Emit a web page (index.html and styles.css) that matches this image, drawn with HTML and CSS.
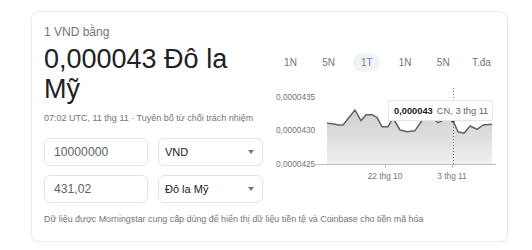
FILE: index.html
```html
<!DOCTYPE html>
<html lang="vi">
<head>
<meta charset="utf-8">
<link rel="stylesheet" href="styles.css">
</head>
<body>
<div class="card">
  <div class="main">
    <div class="left">
      <div class="label">1 VND bằng</div>
      <div class="value">0,000043 Đô la Mỹ</div>
      <div class="time">07:02 UTC, 11 thg 11 · Tuyên bố từ chối trách nhiệm</div>
      <div class="form">
        <div class="row">
          <div class="input">10000000</div>
          <div class="select"><span>VND</span><span class="caret"></span></div>
        </div>
        <div class="row">
          <div class="input">431,02</div>
          <div class="select"><span>Đô la Mỹ</span><span class="caret"></span></div>
        </div>
      </div>
    </div>
    <div class="right">
      <div class="tabs">
        <div class="tab">1N</div>
        <div class="tab">5N</div>
        <div class="tab active">1T</div>
        <div class="tab">1N</div>
        <div class="tab">5N</div>
        <div class="tab">T.đa</div>
      </div>
      <svg class="chart" width="226" height="100" viewBox="270 85 226 100">
        <defs>
          <linearGradient id="fill" x1="0" y1="0" x2="0" y2="1">
            <stop offset="0" stop-color="#cfcfcf"/>
            <stop offset="1" stop-color="#efefef"/>
          </linearGradient>
        </defs>
        <path d="M327,123.3 L333,123.7 L338,125 L343,125 L355,110 L361,120.7 L366,114.7 L372,114.7 L377,117.3 L382,126.7 L388,126.7 L393,118 L400,130 L407,131.7 L415,130.7 L423,119 L430,116 L438,122.7 L445,119.3 L453,120.7 L458,131.7 L464,133.3 L470,126 L477,129.3 L483,125 L492,124.3 L492,164 L327,164 Z" fill="url(#fill)"/>
        <path d="M327,123.3 L333,123.7 L338,125 L343,125 L355,110 L361,120.7 L366,114.7 L372,114.7 L377,117.3 L382,126.7 L388,126.7 L393,118 L400,130 L407,131.7 L415,130.7 L423,119 L430,116 L438,122.7 L445,119.3 L453,120.7 L458,131.7 L464,133.3 L470,126 L477,129.3 L483,125 L492,124.3" fill="none" stroke="#616161" stroke-width="1.5" stroke-linejoin="round"/>
        <line x1="315" y1="164.5" x2="496" y2="164.5" stroke="#bdbdbd" stroke-width="1"/>
        <line x1="385.5" y1="164" x2="385.5" y2="168" stroke="#bdbdbd"/>
        <line x1="452.5" y1="164" x2="452.5" y2="168" stroke="#bdbdbd"/>
        <line x1="453.5" y1="88" x2="453.5" y2="164" stroke="#757575" stroke-dasharray="1,2"/>
        <circle cx="453" cy="120.7" r="2" fill="#424242"/>
        <g class="axis">
          <text x="276" y="99.5">0,0000435</text>
          <text x="276" y="133">0,0000430</text>
          <text x="276" y="167">0,0000425</text>
          <text x="385" y="179" text-anchor="middle">22 thg 10</text>
          <text x="452" y="179" text-anchor="middle">3 thg 11</text>
        </g>
        <rect x="388.5" y="100.5" width="104" height="20" fill="#fff" stroke="#e6e6e6"/>
        <text class="tip" x="394" y="114"><tspan class="tip-v">0,000043</tspan><tspan class="tip-d" dx="4">CN, 3 thg 11</tspan></text>
      </svg>
    </div>
  </div>
  <div class="footer">Dữ liệu được Morningstar cung cấp dùng để hiển thị dữ liệu tiền tệ và Coinbase cho tiền mã hóa</div>
</div>
</body>
</html>
```
FILE: styles.css
```css
* { box-sizing: border-box; }
html, body { margin: 0; padding: 0; background: #fff; }
body {
  font-family: "Liberation Sans", Arial, sans-serif;
  color: #202124;
}
.card {
  margin: 11px 0 0 31px;
  width: 477px;
  height: 231px;
  border: 1px solid #ebebeb;
  border-radius: 8px;
  box-shadow: 0 1px 2px rgba(0,0,0,0.06);
  padding: 12px 11px 0 12px;
  display: flex;
  flex-direction: column;
}
.main {
  display: flex;
  gap: 7px;
}
.left {
  width: 219px;
  display: flex;
  flex-direction: column;
}
.label {
  font-size: 12px;
  line-height: 16px;
  color: #70757a;
}
.value {
  margin-top: 4px;
  font-size: 27px;
  line-height: 30px;
  color: #202124;
}
.time {
  margin-top: 7px;
  font-size: 9px;
  line-height: 14px;
  color: #70757a;
  white-space: nowrap;
}
.form {
  margin-top: 13px;
  display: flex;
  flex-direction: column;
  gap: 9px;
}
.row {
  display: flex;
  gap: 10px;
  height: 28px;
}
.input {
  width: 104px;
  border: 1px solid #e3e3e3;
  border-radius: 6px;
  padding-left: 9px;
  display: flex;
  align-items: center;
  font-size: 12.2px;
  color: #5f6368;
}
.select {
  width: 105px;
  border: 1px solid #e3e3e3;
  border-radius: 6px;
  padding: 0 8px 0 6px;
  display: flex;
  align-items: center;
  justify-content: space-between;
  font-size: 11px;
  color: #202124;
}
.caret {
  width: 0;
  height: 0;
  border-left: 3.5px solid transparent;
  border-right: 3.5px solid transparent;
  border-top: 4px solid #757575;
}
.right {
  width: 226px;
  display: flex;
  flex-direction: column;
}
.tabs {
  margin-top: 29px;
  margin-left: 7px;
  width: 218px;
  display: flex;
  justify-content: space-between;
}
.tab {
  width: 27px;
  height: 19px;
  border-radius: 10px;
  display: flex;
  align-items: center;
  justify-content: center;
  font-size: 10px;
  color: #70757a;
}
.tab.active {
  background: #f1f3f4;
  color: #5b85c0;
}
.chart {
  margin-top: 13px;
  display: block;
}
.axis text {
  font-family: "Liberation Sans", Arial, sans-serif;
  font-size: 8.3px;
  fill: #757575;
}
.tip {
  font-family: "Liberation Sans", Arial, sans-serif;
  font-size: 9.3px;
}
.tip-v { fill: #222; font-weight: 600; }
.tip-d { fill: #666; }
.footer {
  margin-top: 9px;
  font-size: 8.9px;
  line-height: 14px;
  color: #70757a;
}
```
